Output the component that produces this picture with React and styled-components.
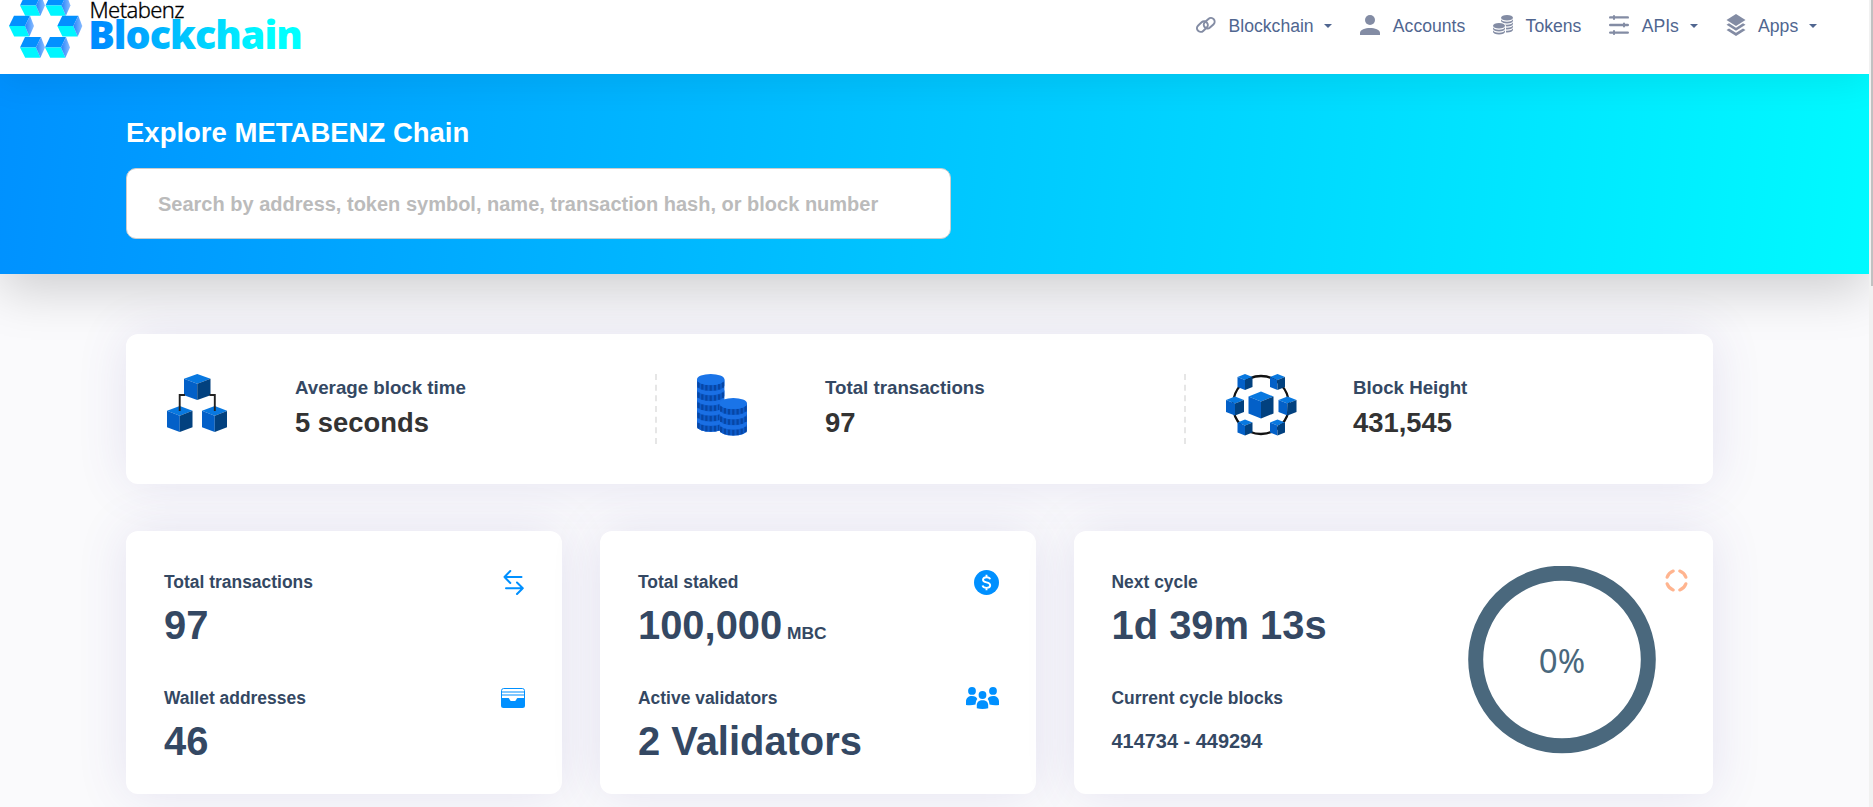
import React from "react";
import styled, { createGlobalStyle } from "styled-components";

const Global = createGlobalStyle`
  * { box-sizing: border-box; }
  html, body { margin: 0; height: 807px; overflow: hidden; }
  body {
    background: #fafafc;
    font-family: "Liberation Sans", Arial, sans-serif;
    color: #344863;
  }
`;

const Shell = styled.div`
  display: flex;
  height: 807px;
  overflow: hidden;
`;

const Page = styled.div`
  flex: 1;
  min-width: 0;
  overflow: hidden;
`;

const ScrollTrack = styled.div`
  width: 4px;
  padding-left: 2px;
  background: #f1f1f1;
`;

const ScrollThumb = styled.div`
  height: 286px;
  background: #c1c1c1;
`;

const Header = styled.header`
  position: relative;
  z-index: 2;
  display: flex;
  justify-content: space-between;
  align-items: flex-start;
  height: 74px;
  padding-right: 52px;
  background: #fff;
  box-shadow: 0 8px 36px rgba(0, 0, 0, 0.08);
`;

const Logo = styled.svg`
  display: block;
`;

const Nav = styled.nav`
  display: flex;
  gap: 28px;
  height: 50px;
  align-items: center;
`;

const NavItem = styled.a`
  display: flex;
  align-items: center;
  font-size: 17.6px;
  line-height: 22px;
  color: #506690;
  svg {
    display: block;
    color: #838ca4;
  }
`;

const NavText = styled.span`
  padding-top: 2px;
  margin-left: 12.4px;
`;

const Caret = styled.span`
  width: 8px;
  margin: 2px 0 0 10.8px;
  border: 4px solid transparent;
  border-top: 4px solid #506690;
  border-bottom: 0;
`;

const Hero = styled.section`
  position: relative;
  z-index: 1;
  height: 200px;
  padding: 42px 0 0 126px;
  background: linear-gradient(95deg, #0091ff 0%, #00faff 100%);
  box-shadow: 0 16px 48px rgba(0, 0, 0, 0.175);
`;

const HeroTitle = styled.h1`
  margin: 0 0 19px;
  padding-top: 1px;
  font-size: 27.5px;
  line-height: 32px;
  color: #fff;
`;

const SearchInput = styled.input`
  display: block;
  width: 825px;
  height: 71px;
  padding: 1px 31px 0;
  border: 1px solid #ccc;
  border-radius: 10px;
  background: #fff;
  font: bold 20px "Liberation Sans", Arial, sans-serif;
  outline: 0;
  &::placeholder {
    color: #bbb;
    opacity: 1;
  }
`;

const Main = styled.main`
  width: 1587px;
  margin: 60px 0 0 126px;
`;

const Panel = styled.section`
  border-radius: 12px;
  background: #fff;
  box-shadow: 0 0 50px rgba(83, 70, 160, 0.13);
`;

const Overview = styled(Panel)`
  display: grid;
  grid-template-columns: repeat(3, 1fr);
  height: 150px;
  padding: 40px 0;
`;

const Stat = styled.div`
  display: flex;
  height: 70px;
  padding-left: ${(p) => (p.$divided ? 40 : 41)}px;
  border-left: ${(p) => (p.$divided ? "2px dashed #e6e6e6" : "0")};
`;

const StatIcon = styled.div`
  width: ${(p) => p.$width || 128}px;
  svg { display: block; }
`;

const StatText = styled.div`
  display: flex;
  flex-direction: column;
  gap: 8px;
  padding-top: 3px;
  font-weight: bold;
`;

const StatLabel = styled.span`
  font-size: 18.72px;
  line-height: 22px;
`;

const StatValue = styled.span`
  font-size: 27.4px;
  line-height: 32px;
  color: #333;
`;

const Cards = styled.div`
  display: grid;
  grid-template-columns: 436px 436px 639px;
  gap: 38px;
  margin-top: 47px;
`;

const Card = styled(Panel)`
  display: flex;
  justify-content: space-between;
  height: 263px;
  padding: 0 ${(p) => p.$right || 37}px 0 ${(p) => p.$left || 38}px;
`;

const Metrics = styled.div`
  display: flex;
  flex-direction: column;
  gap: 40px;
  padding-top: 41px;
  font-weight: bold;
`;

const Metric = styled.div`
  display: flex;
  flex-direction: column;
  gap: 10px;
  height: 76px;
`;

const MetricLabel = styled.span`
  font-size: 17.45px;
  line-height: 20px;
`;

const MetricValue = styled.span`
  font-size: ${(p) => (p.$small ? 19.95 : 39.9)}px;
  line-height: 46px;
  white-space: nowrap;
`;

const Unit = styled.small`
  font-size: 17.4px;
`;

const IconColumn = styled.div`
  display: flex;
  flex-direction: column;
  align-items: flex-end;
  gap: ${(p) => p.$gap}px;
  padding-top: 39px;
  svg { display: block; }
`;

const Gauge = styled.div`
  display: flex;
  gap: 9px;
  padding-top: 35px;
  svg { display: block; }
`;

const CycleMark = styled.svg`
  margin-top: 3px;
`;

const GaugeText = styled.text`
  font-family: "Noto Sans", "Open Sans", sans-serif;
  font-size: 33px;
  fill: #4a687d;
`;

const LogoLight = styled.text`
  font-family: "Noto Sans", "Open Sans", sans-serif;
  font-weight: 300;
  font-size: 22px;
  letter-spacing: -0.6px;
  fill: #000;
  stroke: #000;
  stroke-width: 0.3px;
`;

const LogoHeavy = styled.text`
  font-family: "Noto Sans", "Open Sans", sans-serif;
  font-weight: 900;
  font-size: 39.5px;
  letter-spacing: -1px;
`;

function LogoCube({ x, y }) {
  return (
    <g transform={`translate(${x} ${y})`}>
      <path d="M0 10.4 5 0H21L16 10.4Z" fill="#0390ff" />
      <path d="M0 10.4H16L20.4 20.8H5.2Z" fill="#00f6ff" />
      <path d="M16 10.4 21 0 25 10.4 20.4 20.8Z" fill="url(#cubeSide)" />
    </g>
  );
}

function BrandLogo() {
  return (
    <Logo width="320" height="60" viewBox="0 0 320 60">
      <defs>
        <linearGradient id="cubeSide" x1="0" x2="1">
          <stop offset="0" stopColor="#2384fb" />
          <stop offset="1" stopColor="#8dbdff" />
        </linearGradient>
        <linearGradient id="word" gradientUnits="userSpaceOnUse" x1="91" x2="303" y1="20" y2="40">
          <stop offset="0.05" stopColor="#008cff" />
          <stop offset="0.85" stopColor="#00ffff" />
        </linearGradient>
      </defs>
      <LogoCube x={20} y={-5} />
      <LogoCube x={45.5} y={-5} />
      <LogoCube x={9} y={15.7} />
      <LogoCube x={57.3} y={15.7} />
      <LogoCube x={20} y={37} />
      <LogoCube x={45} y={37} />
      <LogoLight x="89.5" y="18.4">Metabenz</LogoLight>
      <LogoHeavy x="88.2" y="49" fill="url(#word)">Blockchain</LogoHeavy>
    </Logo>
  );
}

const LinkIcon = () => (
  <svg width="20" height="20" viewBox="0 0 20 20" fill="none" stroke="currentColor" strokeWidth="2">
    <rect x="-6" y="-3.7" width="12" height="7.4" rx="3.7" transform="translate(6.4 11.6) rotate(-42)" />
    <rect x="-6" y="-3.7" width="12" height="7.4" rx="3.7" transform="translate(13.2 8.2) rotate(-42)" />
  </svg>
);

const PersonIcon = () => (
  <svg width="20" height="20" viewBox="0 0 20 20" fill="currentColor">
    <circle cx="10" cy="5" r="5" />
    <path d="M0 20v-2c0-3.4 5.2-5 10-5s10 1.600 10 5v2Z" />
  </svg>
);

const TokensIcon = () => (
  <svg width="20" height="20" viewBox="0 0 20 20" fill="currentColor">
    <ellipse cx="14" cy="2.800" rx="6" ry="2.800" />
    {[4, 7, 10, 13].map((y) => (
      <path key={y} d={`M8 ${y}a6 2.800 0 0 0 12 0v1.800a6 2.800 0 0 1-12 0Z`} />
    ))}
    <path d="M-1 10.700a7 3.600 0 0 1 14 0V20H-1Z" fill="#fff" />
    <ellipse cx="6" cy="10.700" rx="6" ry="2.800" />
    {[12, 15].map((y) => (
      <path key={y} d={`M0 ${y}a6 2.800 0 0 0 12 0v1.800a6 2.800 0 0 1-12 0Z`} />
    ))}
  </svg>
);

const SlidersIcon = () => (
  <svg width="20" height="20" viewBox="0 0 20 20" fill="none" stroke="currentColor" strokeLinecap="round">
    <path d="M1.200 2.400H18.800M1.200 10H18.800M1.200 17.600H18.800" strokeWidth="2.400" />
    <path d="M5 1V4M15 8.500V11.500M5 16.100V19.100" strokeWidth="2" />
  </svg>
);

const LayersIcon = () => (
  <svg width="20" height="22" viewBox="0 0 20 22" fill="currentColor">
    <path d="M10 0 19.500 6 10 12 .5 6Z" />
    <path d="M.5 10.800 3 9.300 10 13.800 17 9.300 19.500 10.800 10 16.800Z" />
    <path d="M.5 15.900 3 14.400 10 18.800 17 14.400 19.500 15.900 10 22Z" />
  </svg>
);

function Cube({ x, y, w, h }) {
  const q = h / 5.4;
  return (
    <g transform={`translate(${x} ${y})`}>
      <path d={`M${w / 2} 0 ${w} ${q} ${w / 2} ${q * 2} 0 ${q}Z`} fill="#0878e0" />
      <path d={`M0 ${q} ${w / 2} ${q * 2}V${h}L0 ${h - q}Z`} fill="#0360c8" />
      <path d={`M${w} ${q} ${w / 2} ${q * 2}V${h}L${w} ${h - q}Z`} fill="#02417f" />
    </g>
  );
}

const BlocksIcon = () => (
  <svg width="60" height="58" viewBox="0 0 60 58">
    <Cube x={17} y={0} w={26.5} h={26} />
    <Cube x={0} y={32} w={25.5} h={26} />
    <Cube x={35} y={32} w={25.5} h={26} />
    <path d="M18 21H12.700V37M42.500 21H47.800V37" fill="none" stroke="#222" strokeWidth="1.900" />
  </svg>
);

function CoinStack({ x, y, count, step }) {
  const r = 13.7;
  const ry = 5.5;
  const thick = 6;
  const bottom = ry + (count - 1) * step + thick;
  const stripes = [-12.2, -8.4, -4.3, 0, 4.3, 8.4, 12.2];
  return (
    <g transform={`translate(${x} ${y})`}>
      <path d={`M0 ${ry}V${bottom}A${r} ${ry} 0 0 0 ${2 * r} ${bottom}V${ry}Z`} fill="#1a6fe4" />
      {Array.from({ length: count }, (_, i) => {
        const t = ry + i * step;
        return (
          <g key={i}>
            <path
              d={`M0 ${t}A${r} ${ry} 0 0 0 ${2 * r} ${t}V${t + thick}A${r} ${ry} 0 0 1 0 ${t + thick}Z`}
              fill="#0c5ccc"
            />
            {stripes.map((dx) => {
              const edge = t + ry * Math.sqrt(1 - (dx / r) ** 2);
              return (
                <path key={dx} d={`M${r + dx} ${edge + 0.3}V${edge + thick - 0.3}`} stroke="#0846a4" strokeWidth="2.200" />
              );
            })}
          </g>
        );
      })}
      <ellipse cx={r} cy={ry} rx={r} ry={ry} fill="#1a74e8" />
    </g>
  );
}

const CoinsIcon = () => (
  <svg width="50" height="62" viewBox="0 0 50 62">
    <CoinStack x={0} y={0} count={5} step={10.2} />
    <CoinStack x={22.600} y={24} count={3} step={10.3} />
  </svg>
);

const NetworkIcon = () => (
  <svg width="72" height="62" viewBox="0 0 72 62">
    <ellipse cx="35" cy="31" rx="28" ry="29" fill="none" stroke="#111" strokeWidth="2.300" />
    <Cube x={11.500} y={0} w={15} h={16} />
    <Cube x={44} y={0} w={15} h={16} />
    <Cube x={0} y={22.500} w={18} h={19} />
    <Cube x={52.500} y={22.500} w={18} h={19} />
    <Cube x={11.500} y={45.500} w={15} h={16} />
    <Cube x={44} y={45.500} w={15} h={16} />
    <Cube x={22.500} y={17.500} w={25} h={27} />
  </svg>
);

const SwapIcon = () => (
  <svg width="22" height="25" viewBox="0 0 22 25" fill="none" stroke="#0090ff" strokeWidth="2" strokeLinecap="round" strokeLinejoin="round">
    <path d="M7.300 1 1.500 7 7.300 13M1.500 7H18.500" />
    <path d="M14 12.500 19.800 18.200 14 24M19.800 18.200H3" />
  </svg>
);

const WalletIcon = () => (
  <svg width="24" height="20" viewBox="0 0 24 20">
    <rect x=".5" y=".5" width="23" height="13" rx="2.200" fill="#fff" stroke="#0090ff" />
    <path d="M1 4H23M1 7H23" stroke="#0090ff" strokeWidth="1.100" />
    <path d="M0 10H7.500C8.500 10 8.500 13.500 12 13.500S15.500 10 16.500 10H24V17.500A2.500 2.500 0 0 1 21.500 20H2.500A2.500 2.500 0 0 1 0 17.500Z" fill="#0090ff" />
  </svg>
);

const DollarIcon = () => (
  <svg width="25" height="25" viewBox="0 0 25 25">
    <circle cx="12.500" cy="12.500" r="12.500" fill="#0090ff" />
    <path
      d="M16.100 9.200C15.700 7.900 14.400 7.200 12.500 7.200 10.400 7.200 9 8.100 9 9.700 9 11.300 10.400 11.900 12.500 12.400 14.800 12.900 16.200 13.500 16.200 15.300 16.200 17 14.700 17.900 12.500 17.900 10.300 17.900 8.900 17 8.500 15.600M12.500 4.800V7.200M12.500 17.900V20.300"
      fill="none"
      stroke="#fff"
      strokeWidth="1.900"
    />
  </svg>
);

const GroupIcon = () => (
  <svg width="33" height="22" viewBox="0 0 33 22" fill="#0090ff">
    <circle cx="6" cy="3.900" r="3.900" />
    <circle cx="27" cy="3.900" r="3.900" />
    <path d="M0 18V14.500C0 11 2.500 9 6 9 8.800 9 10.600 10 11.300 12 10 13.500 9.800 15.500 9.500 17.500 6.500 18.400 3 18.400 0 18Z" />
    <path d="M33 18V14.500C33 11 30.500 9 27 9 24.200 9 22.400 10 21.700 12 23 13.500 23.200 15.500 23.500 17.500 26.500 18.400 30 18.400 33 18Z" />
    <circle cx="16.500" cy="8" r="3.900" />
    <path d="M10.800 21.300V18.500C10.800 15 13 13.200 16.500 13.200S22.200 15 22.200 18.500V21.300C19 22.200 14 22.200 10.800 21.300Z" />
  </svg>
);

const CycleIcon = () => (
  <CycleMark width="23" height="23" viewBox="-11.5 -11.5 23 23" fill="none" stroke="#ffb48f" strokeWidth="3.200" strokeLinecap="round">
    {[0, 90, 180, 270].map((a) => (
      <path key={a} d="M3.300 -9.400A10 10 0 0 1 9.400 -3.300" transform={`rotate(${a})`} />
    ))}
  </CycleMark>
);

const navItems = [
  { label: "Blockchain", icon: <LinkIcon />, menu: true },
  { label: "Accounts", icon: <PersonIcon /> },
  { label: "Tokens", icon: <TokensIcon /> },
  { label: "APIs", icon: <SlidersIcon />, menu: true },
  { label: "Apps", icon: <LayersIcon />, menu: true },
];

const stats = [
  { label: "Average block time", value: "5 seconds", icon: <BlocksIcon /> },
  { label: "Total transactions", value: "97", icon: <CoinsIcon /> },
  { label: "Block Height", value: "431,545", icon: <NetworkIcon />, iconWidth: 127 },
];

export default function App() {
  return (
    <Shell>
      <Global />
      <Page>
        <Header>
          <BrandLogo />
          <Nav>
            {navItems.map((item) => (
              <NavItem key={item.label}>
                {item.icon}
                <NavText>{item.label}</NavText>
                {item.menu && <Caret />}
              </NavItem>
            ))}
          </Nav>
        </Header>
        <Hero>
          <HeroTitle>Explore METABENZ Chain</HeroTitle>
          <SearchInput placeholder="Search by address, token symbol, name, transaction hash, or block number" />
        </Hero>
        <Main>
          <Overview>
            {stats.map((s, i) => (
              <Stat key={s.label} $divided={i > 0}>
                <StatIcon $width={s.iconWidth}>{s.icon}</StatIcon>
                <StatText>
                  <StatLabel>{s.label}</StatLabel>
                  <StatValue>{s.value}</StatValue>
                </StatText>
              </Stat>
            ))}
          </Overview>
          <Cards>
            <Card>
              <Metrics>
                <Metric>
                  <MetricLabel>Total transactions</MetricLabel>
                  <MetricValue>97</MetricValue>
                </Metric>
                <Metric>
                  <MetricLabel>Wallet addresses</MetricLabel>
                  <MetricValue>46</MetricValue>
                </Metric>
              </Metrics>
              <IconColumn $gap={93}>
                <SwapIcon />
                <WalletIcon />
              </IconColumn>
            </Card>
            <Card>
              <Metrics>
                <Metric>
                  <MetricLabel>Total staked</MetricLabel>
                  <MetricValue>
                    100,000<Unit> MBC</Unit>
                  </MetricValue>
                </Metric>
                <Metric>
                  <MetricLabel>Active validators</MetricLabel>
                  <MetricValue>2 Validators</MetricValue>
                </Metric>
              </Metrics>
              <IconColumn $gap={92}>
                <DollarIcon />
                <GroupIcon />
              </IconColumn>
            </Card>
            <Card $left={37.5} $right={25}>
              <Metrics>
                <Metric>
                  <MetricLabel>Next cycle</MetricLabel>
                  <MetricValue>1d 39m 13s</MetricValue>
                </Metric>
                <Metric>
                  <MetricLabel>Current cycle blocks</MetricLabel>
                  <MetricValue $small>414734 - 449294</MetricValue>
                </Metric>
              </Metrics>
              <Gauge>
                <svg width="188" height="188" viewBox="0 0 188 188">
                  <circle cx="94" cy="93.500" r="86.300" fill="none" stroke="#4a687d" strokeWidth="15" />
                  <GaugeText x="94" y="107" textAnchor="middle">0%</GaugeText>
                </svg>
                <CycleIcon />
              </Gauge>
            </Card>
          </Cards>
        </Main>
      </Page>
      <ScrollTrack>
        <ScrollThumb />
      </ScrollTrack>
    </Shell>
  );
}
